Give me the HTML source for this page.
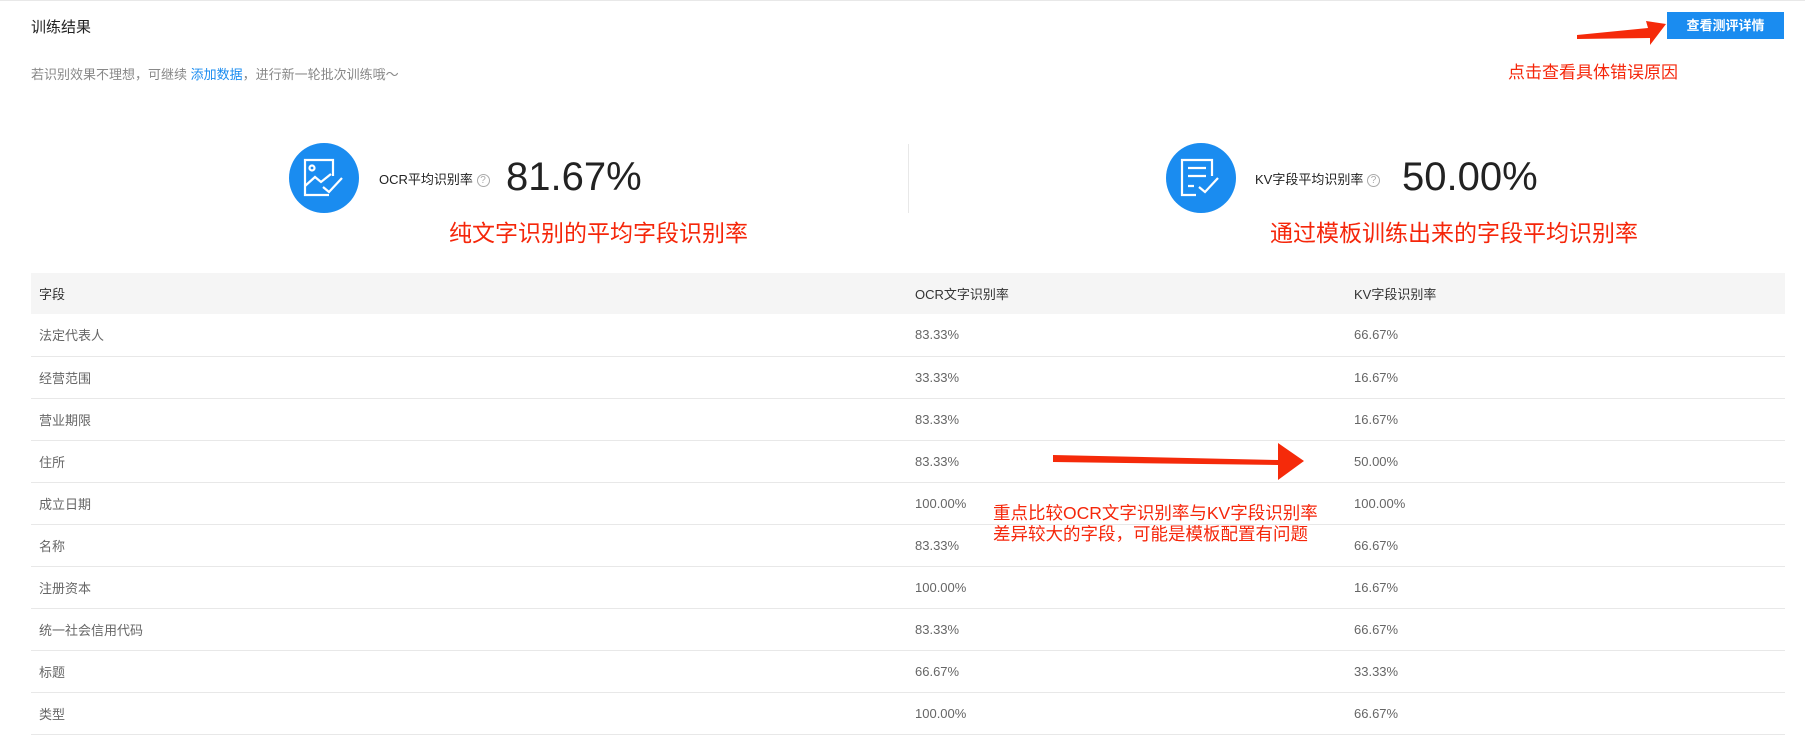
<!DOCTYPE html>
<html><head><meta charset="utf-8"><style>
*{margin:0;padding:0;box-sizing:border-box}
body{width:1805px;height:754px;background:#fff;font-family:"Liberation Sans","Noto Sans CJK SC",sans-serif;position:relative;overflow:hidden;color:#333}
.topline{position:absolute;left:0;top:0;width:1805px;height:1px;background:#e8e8e8}
.a{position:absolute;white-space:nowrap}
.red{color:#f5260a}
.btn{position:absolute;left:1667px;top:12px;width:117px;height:27px;background:#1a8cf0;color:#fff;font-size:13px;font-weight:bold;text-align:center;line-height:27px}
.circ{position:absolute;width:70px;height:70px;border-radius:50%;background:#1a8cf0}
.q{display:inline-block;width:13px;height:13px;border:1px solid #aaa;border-radius:50%;font-size:10px;color:#aaa;text-align:center;line-height:11px;vertical-align:middle}
table{position:absolute;left:31px;top:273px;width:1754px;border-collapse:collapse;font-size:13px}
th{background:#f5f5f5;height:41px;text-align:left;font-weight:normal;color:#333;padding-left:8px}
td{height:42px;border-bottom:1px solid #e8e8e8;color:#666;padding-left:8px}
</style></head><body>
<div class="topline"></div>
<div class="a" style="left:31px;top:16px;font-size:15px;color:#222">训练结果</div>
<div class="a" style="left:31px;top:64px;font-size:13px;color:#888">若识别效果不理想，可继续 <span style="color:#1a8cf0">添加数据</span>，进行新一轮批次训练哦～</div>
<div class="btn">查看测评详情</div>
<svg class="a" style="left:1570px;top:10px" width="100" height="40"><polygon points="7,25 78,18 76,11 96,14 80,35 80,28 7,29" fill="#f52a0a"/></svg>
<div class="a red" style="left:1508px;top:58px;font-size:17px">点击查看具体错误原因</div>

<div class="circ" style="left:289px;top:143px"><svg width="70" height="70" fill="none" stroke="#fff" stroke-width="2.2"><path d="M40 52H16V17h28v16"/><circle cx="23" cy="25" r="2.5"/><path d="M16 43l10-9 6 5 10-8"/><path d="M34 44l6 5 13-14"/></svg></div>
<div class="a" style="left:379px;top:169px;font-size:13px;color:#222">OCR平均识别率 <span class="q">?</span></div>
<div class="a" style="left:506px;top:155px;font-size:40px;color:#222">81.67%</div>
<div class="a" style="left:908px;top:144px;width:1px;height:69px;background:#e8e8e8"></div>
<div class="a red" style="left:449px;top:214px;font-size:23px">纯文字识别的平均字段识别率</div>

<div class="circ" style="left:1166px;top:143px"><svg width="70" height="70" fill="none" stroke="#fff" stroke-width="2.2"><path d="M30 52H16V17h30v16"/><path d="M22 25h18M22 33h18M22 43h6"/><path d="M33 44l6 5 13-14"/></svg></div>
<div class="a" style="left:1255px;top:169px;font-size:13px;color:#222">KV字段平均识别率 <span class="q">?</span></div>
<div class="a" style="left:1402px;top:155px;font-size:40px;color:#222">50.00%</div>
<div class="a red" style="left:1270px;top:214px;font-size:23px">通过模板训练出来的字段平均识别率</div>

<table>
<tr><th style="width:876px">字段</th><th style="width:439px">OCR文字识别率</th><th>KV字段识别率</th></tr>
<tr><td>法定代表人</td><td>83.33%</td><td>66.67%</td></tr>
<tr><td>经营范围</td><td>33.33%</td><td>16.67%</td></tr>
<tr><td>营业期限</td><td>83.33%</td><td>16.67%</td></tr>
<tr><td>住所</td><td>83.33%</td><td>50.00%</td></tr>
<tr><td>成立日期</td><td>100.00%</td><td>100.00%</td></tr>
<tr><td>名称</td><td>83.33%</td><td>66.67%</td></tr>
<tr><td>注册资本</td><td>100.00%</td><td>16.67%</td></tr>
<tr><td>统一社会信用代码</td><td>83.33%</td><td>66.67%</td></tr>
<tr><td>标题</td><td>66.67%</td><td>33.33%</td></tr>
<tr><td>类型</td><td>100.00%</td><td>66.67%</td></tr>
</table>
<svg class="a" style="left:1050px;top:440px" width="260" height="42"><polygon points="3,15 228,20 228,3 254,21 228,40 228,25 3,22" fill="#f52a0a"/></svg>
<div class="a red" style="left:993px;top:503px;font-size:17.5px;line-height:21px">重点比较OCR文字识别率与KV字段识别率<br>差异较大的字段，可能是模板配置有问题</div>
</body></html>
